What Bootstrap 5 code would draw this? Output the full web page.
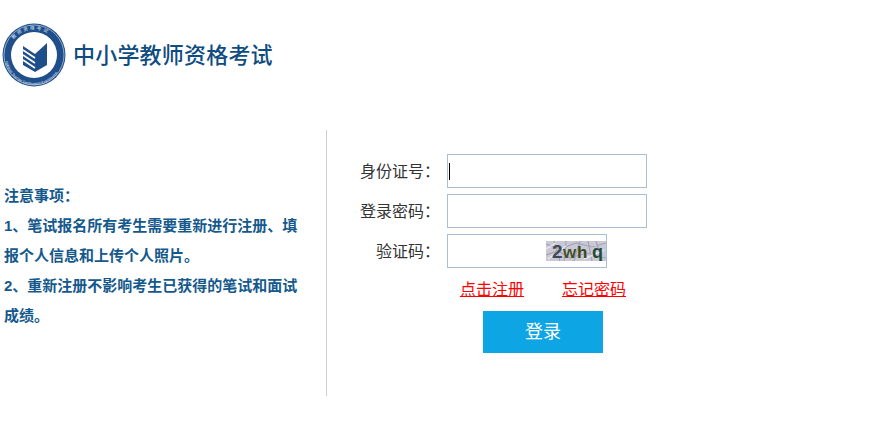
<!DOCTYPE html>
<html lang="zh-CN">
<head>
    <meta charset="UTF-8">
    <meta name="viewport" content="width=device-width, initial-scale=1.0">
    <title>中小学教师资格考试</title>
    <link href="https://cdn.jsdelivr.net/npm/bootstrap@5.3.0/dist/css/bootstrap.min.css" rel="stylesheet">
    <style>
        body { font-family: "Liberation Sans", "Noto Sans CJK SC", sans-serif; background: #fff; }
        .site-head { padding: 22px 0 0 1px; height: 130px; }
        .brand-line { gap: 7px; height: 66px; }
        .site-title { font-size: 22px; font-weight: 500; color: #0f4c81; letter-spacing: .2px; margin-left: -1px; }
        .main-area { height: 266px; width: 660px; }
        .notice-col { width: 327px; border-right: 1px solid #c9cfd2; padding: 51px 24px 0 4px; }
        .notice-col p { margin: 0; font-size: 15px; line-height: 30px; font-weight: 700; color: #15598c; }
        .login-col { padding: 24px 0 0 0; }
        .form-line { height: 34px; margin-bottom: 6px; }
        .form-line label { width: 113px; margin-right: 7px; padding-top: 2px; text-align: right; font-size: 16px; color: #333; flex: none; }
        .field-box { width: 200px; height: 34px; border: 1px solid #a9bfd4; border-radius: 0; outline: 0; padding: 0 2px; }
        .field-short { width: 160px; }
        .caret-mark { position: absolute; left: 2px; top: 9px; width: 1px; height: 17px; background: #000; }
        .captcha-pic { position: absolute; left: 99px; top: 7px; }
        .link-line { padding-left: 133px; gap: 38px; margin-top: 9px; line-height: 26px; }
        .link-line a { color: #f00; font-size: 16px; }
        .login-btn { width: 120px; height: 42px; background: #0ea5e4; color: #fff; font-size: 18px; border: 0; border-radius: 0; margin: 8px 0 0 156px; padding: 0; }
        .login-btn:hover { background: #0ea5e4; color: #fff; }
    </style>
</head>
<body>
<div class="site-head">
    <div class="brand-line d-flex align-items-center">
        <svg width="66" height="66" viewBox="0 0 66 66">
            <defs><path id="sealArc" d="M8 38 A25.5 25.5 0 1 1 58 38"></path><path id="sealArcLow" d="M4 34 A29 29 0 0 0 62 34"></path></defs>
            <circle cx="33" cy="33" r="31.5" fill="#1f4f8b"></circle>
            <circle cx="33" cy="33" r="30" fill="none" stroke="#dfe8f2" stroke-width=".6"></circle>
            <circle cx="33" cy="33" r="23" fill="#fff"></circle>
            <text font-size="4.5" fill="#e6edf5" letter-spacing="2" font-family="Noto Sans CJK SC, sans-serif"><textPath href="#sealArc" startOffset="24%">教师资格考试</textPath></text>
            <text font-size="3.6" fill="#e6edf5" font-family="Liberation Sans, sans-serif"><textPath href="#sealArcLow" startOffset="6%">National Teacher Certification Examination</textPath></text>
            <path d="M22 24 L34 32 L34 50 L22 43 Z" fill="#1f4f8b"></path>
            <path d="M34 32 L46 21 L46 43 L34 50 Z" fill="#1f4f8b"></path>
            <path d="M22 28 L34 36 M22 33 L34 41 M22 38 L34 46" stroke="#fff" stroke-width="1.6" fill="none"></path>
        </svg>
        <div class="site-title">中小学教师资格考试</div>
    </div>
</div>
<div class="main-area d-flex">
    <div class="notice-col">
        <p>注意事项：</p>
        <p>1、笔试报名所有考生需要重新进行注册、填报个人信息和上传个人照片。</p>
        <p>2、重新注册不影响考生已获得的笔试和面试成绩。</p>
    </div>
    <div class="login-col flex-grow-1">
        <div class="form-line d-flex align-items-center">
            <label for="idNo">身份证号：</label>
            <div class="position-relative">
                <input id="idNo" type="text" class="field-box d-block">
                <span class="caret-mark"></span>
            </div>
        </div>
        <div class="form-line d-flex align-items-center">
            <label for="pwd">登录密码：</label>
            <input id="pwd" type="password" class="field-box">
        </div>
        <div class="form-line d-flex align-items-center">
            <label for="code">验证码：</label>
            <div class="position-relative">
                <input id="code" type="text" class="field-box field-short d-block">
                <svg class="captcha-pic" width="60" height="20" viewBox="0 0 60 20">
                    <rect width="60" height="20" fill="#c9c9d6"></rect>
                    <path d="M0 3 L14 8 L30 2 L46 6 L60 2 M0 14 L12 10 L24 17 L40 12 L60 17 M8 0 L14 20 M34 0 L28 20 M50 0 L56 20 M20 0 L18 20 M42 0 L46 20" stroke="#a9a3b5" stroke-width="1.2" fill="none"></path>
                    <path d="M2 18 L20 5 M38 18 L58 9 M0 8 L10 2" stroke="#e8e8ee" stroke-width="1.4" fill="none"></path>
                    <text x="6" y="17" font-size="19" font-weight="700" fill="#3f4a55" font-family="Liberation Sans, sans-serif">2</text>
                    <text x="17" y="17" font-size="17" font-weight="700" fill="#46502c" font-family="Liberation Sans, sans-serif">w</text>
                    <text x="31" y="17" font-size="17" font-weight="700" fill="#3a4a1c" font-family="Liberation Sans, sans-serif">h</text>
                    <text x="46" y="17" font-size="18" font-weight="700" fill="#1f4a3c" font-family="Liberation Sans, sans-serif">q</text>
                </svg>
            </div>
        </div>
        <div class="link-line d-flex">
            <a href="#">点击注册</a>
            <a href="#">忘记密码</a>
        </div>
        <button type="button" class="btn login-btn d-block">登录</button>
    </div>
</div>
<script src="https://cdn.jsdelivr.net/npm/bootstrap@5.3.0/dist/js/bootstrap.bundle.min.js"></script>
</body>
</html>
